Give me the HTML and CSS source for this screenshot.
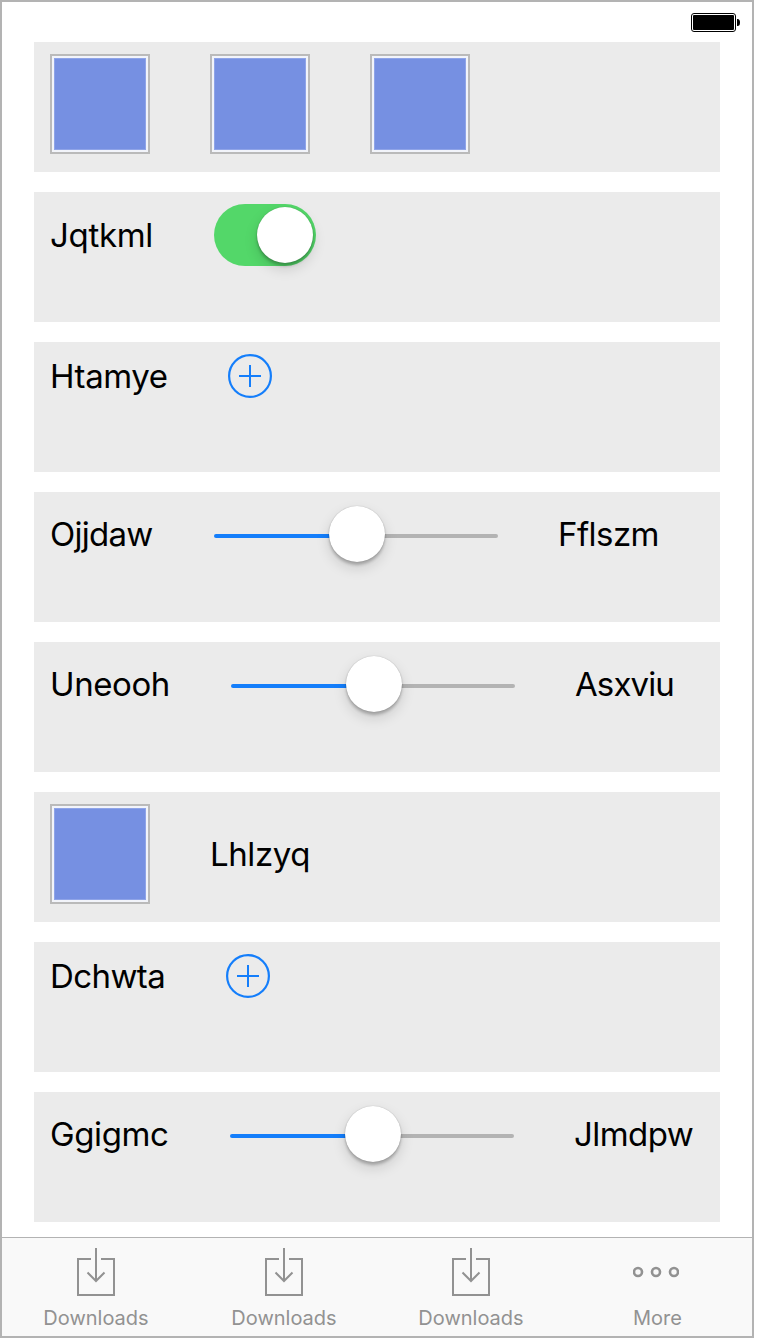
FILE: index.html
```html
<!DOCTYPE html>
<html lang="en">
<head>
<meta charset="utf-8">
<title>Components</title>
<link rel="stylesheet" href="styles.css">
</head>
<body>
<div class="phone">
  <header class="status">
    <svg class="battery" width="49" height="19" viewBox="0 0 49 19">
      <rect x=".5" y=".5" width="44" height="18" rx="2.5" fill="none" stroke="#000"/>
      <rect x="2" y="2" width="41" height="15" rx="1" fill="#000"/>
      <path d="M46 6h.5a2.5 3.5 0 0 1 0 7H46z" fill="#000"/>
    </svg>
  </header>
  <main class="rows">
    <section class="row">
      <div class="swatch"></div><div class="swatch"></div><div class="swatch"></div>
    </section>
    <section class="row">
      <span class="label w104 t-jq">Jqtkml</span>
      <div class="switch"><div class="knob"></div></div>
    </section>
    <section class="row">
      <span class="label w118 t-ht">Htamye</span>
      <svg class="add" width="44" height="44" viewBox="0 0 44 44"><circle cx="22" cy="22" r="20.9"/><path d="M22 11v22M11 22h22"/></svg>
    </section>
    <section class="row">
      <span class="label w104 t-oj">Ojjdaw</span>
      <div class="slider"><div class="track"></div><div class="knob"></div></div>
      <span class="label t-ff">Fflszm</span>
    </section>
    <section class="row">
      <span class="label w121 t-un">Uneooh</span>
      <div class="slider"><div class="track"></div><div class="knob"></div></div>
      <span class="label t-as">Asxviu</span>
    </section>
    <section class="row">
      <div class="swatch"></div>
      <span class="label t-lh">Lhlzyq</span>
    </section>
    <section class="row">
      <span class="label w116 t-dc">Dchwta</span>
      <svg class="add" width="44" height="44" viewBox="0 0 44 44"><circle cx="22" cy="22" r="20.9"/><path d="M22 11v22M11 22h22"/></svg>
    </section>
    <section class="row">
      <span class="label w120 t-gg">Ggigmc</span>
      <div class="slider"><div class="track"></div><div class="knob"></div></div>
      <span class="label t-jl">Jlmdpw</span>
    </section>
  </main>
  <nav class="tabs">
    <div class="tab"><svg class="icon" width="38" height="48" viewBox="0 0 38 48"><path d="M14 11H1v36h36V11H24M19 0v33M10.5 24.5l8.5 8.5 8.5-8.5"/></svg><span>Downloads</span></div>
    <div class="tab"><svg class="icon" width="38" height="48" viewBox="0 0 38 48"><path d="M14 11H1v36h36V11H24M19 0v33M10.5 24.5l8.5 8.5 8.5-8.5"/></svg><span>Downloads</span></div>
    <div class="tab"><svg class="icon" width="38" height="48" viewBox="0 0 38 48"><path d="M14 11H1v36h36V11H24M19 0v33M10.5 24.5l8.5 8.5 8.5-8.5"/></svg><span>Downloads</span></div>
    <div class="tab"><svg class="icon more" width="46" height="48" viewBox="0 0 46 48"><circle cx="5" cy="24" r="4"/><circle cx="23" cy="24" r="4"/><circle cx="41" cy="24" r="4"/></svg><span>More</span></div>
  </nav>
</div>
</body>
</html>
```
FILE: styles.css
```css
*, *::before { box-sizing: border-box; }
body { margin: 0; background: #fff; font-family: Inter, "Liberation Sans", sans-serif; }
.phone { width: 754px; height: 1338px; border: 2px solid #b3b3b3; display: flex; flex-direction: column; }
.status { height: 40px; padding: 11px 12px 0 0; display: flex; justify-content: flex-end; align-items: flex-start; }
.rows { flex: 1; padding: 0 32px; display: flex; flex-direction: column; gap: 20px; }
.row { height: 130px; padding: 12px 16px; background: #ebebeb; display: grid; grid-auto-flow: column; grid-auto-columns: max-content; grid-template-rows: max-content; align-items: center; column-gap: 60px; }
.label { font-size: 33px; line-height: 40px; color: #000; white-space: nowrap; }
.w104 { width: 104px; }
.w116 { width: 116px; }
.w118 { width: 118px; }
.w120 { width: 120px; }
.w121 { width: 121px; }
.t-jq { letter-spacing: -.3px; }
.t-ht, .t-un, .t-lh, .t-gg { letter-spacing: -.4px; }
.t-oj { letter-spacing: -.75px; }
.t-ff, .t-jl { letter-spacing: -.55px; }
.t-dc { letter-spacing: -.6px; }
.t-as { letter-spacing: -.9px; }
.swatch { width: 100px; height: 100px; border: 2px solid #bababa; padding: 2px; background: #f2f4fa; }
.swatch::before { content: ""; display: block; height: 92px; border: 1px solid #8fa4e8; background: #7690e2; }
.knob { width: 56px; height: 56px; border-radius: 50%; background: #fff; box-shadow: 0 0 1px rgba(0,0,0,.3), 0 3px 3px rgba(0,0,0,.22), 0 6px 14px rgba(0,0,0,.14); }
.switch { width: 102px; height: 62px; padding: 3px; border-radius: 31px; background: #53d769; display: flex; justify-content: flex-end; }
.add { display: block; fill: none; stroke: #147efb; stroke-width: 2; }
.add circle { stroke-width: 2.2; }
.slider { position: relative; width: 284px; height: 60px; padding-top: 30px; }
.slider .knob { position: absolute; left: 115px; top: 2px; }
.track { height: 4px; border-radius: 2px; background: linear-gradient(90deg, #147efb 50%, #b3b3b3 50%); }
.tabs { height: 99px; border-top: 1px solid #b3b3b3; background: #f9f9f9; display: grid; grid-template-columns: 188px 188px 186px 187px; }
.tab { padding-top: 10px; display: flex; flex-direction: column; align-items: center; font-size: 20px; line-height: 24px; color: #929292; }
.tab span { margin-top: 10px; }
.icon { fill: none; stroke: #929292; stroke-width: 2; }
.more { stroke-width: 2.6; margin-right: 3px; }
```
